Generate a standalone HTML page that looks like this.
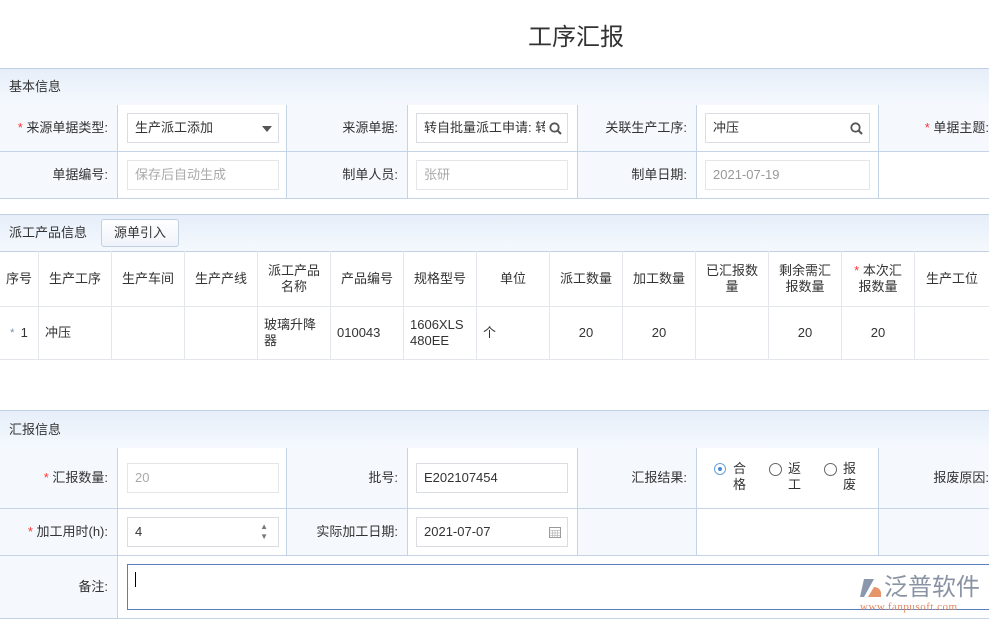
<!DOCTYPE html>
<html><head><meta charset="utf-8"><style>
*{margin:0;padding:0;box-sizing:border-box}
body{width:989px;height:623px;overflow:hidden;background:#fff;font-family:"Liberation Sans","Noto Sans CJK SC",sans-serif;font-size:13px;color:#333;position:relative}
.a{position:absolute}
.hd{position:absolute;left:0;width:989px;background:linear-gradient(#e6eef9,#f5f9fe);border-top:1px solid #c2d0e4;border-bottom:1px solid #c2d0e4;padding-left:9px;color:#333}
.lb{position:absolute;background:#f5f9fe;border-right:1px solid #c5d3e6;border-bottom:1px solid #c5d3e6;text-align:right;padding-right:9px;color:#333}
.vl{position:absolute;background:#fff;border-right:1px solid #c5d3e6;border-bottom:1px solid #c5d3e6}
.in{position:absolute;border:1px solid #d9dde2;background:#fff;height:30px;line-height:28px;padding-left:7px;color:#333;font-size:13px;overflow:hidden;white-space:nowrap}
.ph{color:#aaa}
.s{color:#f33}
.th,.td{position:absolute;border-right:1px solid #e3e6ea;border-bottom:1px solid #e3e6ea;display:flex;align-items:center;justify-content:center;text-align:center;line-height:16px;font-size:13px}
</style></head><body>
<div class="a" style="left:0;top:17px;width:1152px;text-align:center;font-size:24px;color:#333">工序汇报</div>

<div class="hd" style="top:68px;height:38px;line-height:36px">基本信息</div>
<div class="lb" style="left:0;top:105px;width:118px;height:47px;line-height:46px"><span class="s">* </span>来源单据类型:</div>
<div class="vl" style="left:118px;top:105px;width:169px;height:47px"></div>
<div class="in" style="left:127px;top:113px;width:152px">生产派工添加<span class="a" style="right:6px;top:12px;border-left:5px solid transparent;border-right:5px solid transparent;border-top:6px solid #555"></span></div>
<div class="lb" style="left:287px;top:105px;width:121px;height:47px;line-height:46px">来源单据:</div>
<div class="vl" style="left:408px;top:105px;width:170px;height:47px"></div>
<div class="in" style="left:416px;top:113px;width:152px;padding-right:22px">转自批量派工申请: 转<span class="a" style="right:0;top:0;width:22px;height:28px;background:#fff"></span></div>
<svg class="a" style="left:549px;top:122px" width="13" height="13" viewBox="0 0 13 13"><circle cx="5.5" cy="5.5" r="4.2" fill="none" stroke="#555" stroke-width="1.8"/><path d="M8.5 8.5L12 12" stroke="#555" stroke-width="2"/></svg>
<div class="lb" style="left:578px;top:105px;width:119px;height:47px;line-height:46px">关联生产工序:</div>
<div class="vl" style="left:697px;top:105px;width:182px;height:47px"></div>
<div class="in" style="left:705px;top:113px;width:165px">冲压<svg class="a" style="right:6px;top:8px" width="13" height="13" viewBox="0 0 13 13"><circle cx="5.5" cy="5.5" r="4.2" fill="none" stroke="#555" stroke-width="1.8"/><path d="M8.5 8.5L12 12" stroke="#555" stroke-width="2"/></svg></div>
<div class="lb" style="left:879px;top:105px;width:110px;height:47px;line-height:46px;border-right:0;padding-right:0"><span class="s">* </span>单据主题:</div>

<div class="lb" style="left:0;top:152px;width:118px;height:47px;line-height:46px">单据编号:</div>
<div class="vl" style="left:118px;top:152px;width:169px;height:47px"></div>
<div class="in ph" style="left:127px;top:160px;width:152px;background:#fff;border-color:#e4e6e9">保存后自动生成</div>
<div class="lb" style="left:287px;top:152px;width:121px;height:47px;line-height:46px">制单人员:</div>
<div class="vl" style="left:408px;top:152px;width:170px;height:47px"></div>
<div class="in ph" style="left:416px;top:160px;width:152px;border-color:#e4e6e9">张研</div>
<div class="lb" style="left:578px;top:152px;width:119px;height:47px;line-height:46px">制单日期:</div>
<div class="vl" style="left:697px;top:152px;width:182px;height:47px"></div>
<div class="in ph" style="left:705px;top:160px;width:165px;border-color:#e4e6e9;color:#999">2021-07-19</div>
<div class="vl" style="left:879px;top:152px;width:110px;height:47px;border-right:0;background:#fff"></div>

<div class="hd" style="top:214px;height:38px;line-height:36px">派工产品信息<span class="a" style="left:101px;top:4px;width:78px;height:28px;border:1px solid #c2d0e4;border-radius:3px;background:linear-gradient(#fff,#eef3fa);text-align:center;line-height:26px">源单引入</span></div>

<div class="th" style="left:0;top:251px;width:39px;height:56px">序号</div>
<div class="th" style="left:39px;top:251px;width:73px;height:56px">生产工序</div>
<div class="th" style="left:112px;top:251px;width:73px;height:56px">生产车间</div>
<div class="th" style="left:185px;top:251px;width:73px;height:56px">生产产线</div>
<div class="th" style="left:258px;top:251px;width:73px;height:56px">派工产品<br>名称</div>
<div class="th" style="left:331px;top:251px;width:73px;height:56px">产品编号</div>
<div class="th" style="left:404px;top:251px;width:73px;height:56px">规格型号</div>
<div class="th" style="left:477px;top:251px;width:73px;height:56px">单位</div>
<div class="th" style="left:550px;top:251px;width:73px;height:56px">派工数量</div>
<div class="th" style="left:623px;top:251px;width:73px;height:56px">加工数量</div>
<div class="th" style="left:696px;top:251px;width:73px;height:56px;align-items:flex-start;padding-top:12px">已汇报数<br>量</div>
<div class="th" style="left:769px;top:251px;width:73px;height:56px">剩余需汇<br>报数量</div>
<div class="th" style="left:842px;top:251px;width:73px;height:56px"><span><span class="s">* </span>本次汇<br>报数量</span></div>
<div class="th" style="left:915px;top:251px;width:74px;height:56px;border-right:0">生产工位</div>

<div class="td" style="left:0;top:307px;width:39px;height:53px"><span style="color:#7a8cb0;font-size:11px">*&nbsp;&nbsp;</span>1</div>
<div class="td" style="left:39px;top:307px;width:73px;height:53px;justify-content:flex-start;padding-left:6px">冲压</div>
<div class="td" style="left:112px;top:307px;width:73px;height:53px"></div>
<div class="td" style="left:185px;top:307px;width:73px;height:53px"></div>
<div class="td" style="left:258px;top:307px;width:73px;height:53px;justify-content:flex-start;text-align:left;padding-left:6px">玻璃升降<br>器</div>
<div class="td" style="left:331px;top:307px;width:73px;height:53px;justify-content:flex-start;padding-left:6px">010043</div>
<div class="td" style="left:404px;top:307px;width:73px;height:53px;justify-content:flex-start;text-align:left;padding-left:6px">1606XLS<br>480EE</div>
<div class="td" style="left:477px;top:307px;width:73px;height:53px;justify-content:flex-start;padding-left:6px">个</div>
<div class="td" style="left:550px;top:307px;width:73px;height:53px">20</div>
<div class="td" style="left:623px;top:307px;width:73px;height:53px">20</div>
<div class="td" style="left:696px;top:307px;width:73px;height:53px"></div>
<div class="td" style="left:769px;top:307px;width:73px;height:53px">20</div>
<div class="td" style="left:842px;top:307px;width:73px;height:53px">20</div>
<div class="td" style="left:915px;top:307px;width:74px;height:53px;border-right:0"></div>

<div class="hd" style="top:410px;height:39px;line-height:37px">汇报信息</div>
<div class="lb" style="left:0;top:448px;width:118px;height:61px;line-height:60px"><span class="s">* </span>汇报数量:</div>
<div class="vl" style="left:118px;top:448px;width:169px;height:61px"></div>
<div class="in ph" style="left:127px;top:463px;width:152px;border-color:#e4e6e9">20</div>
<div class="lb" style="left:287px;top:448px;width:121px;height:61px;line-height:60px">批号:</div>
<div class="vl" style="left:408px;top:448px;width:170px;height:61px"></div>
<div class="in" style="left:416px;top:463px;width:152px">E202107454</div>
<div class="lb" style="left:578px;top:448px;width:119px;height:61px;line-height:60px">汇报结果:</div>
<div class="vl" style="left:697px;top:448px;width:182px;height:61px"></div>
<div class="a" style="left:714px;top:463px;width:12px;height:12px;border:1px solid #6aa0d8;border-radius:50%"><div class="a" style="left:3px;top:3px;width:4px;height:4px;border-radius:50%;background:#4a8ad0"></div></div>
<div class="a" style="left:733px;top:461px;width:14px;line-height:16px">合格</div>
<div class="a" style="left:769px;top:463px;width:13px;height:13px;border:1px solid #666;border-radius:50%"></div>
<div class="a" style="left:788px;top:461px;width:14px;line-height:16px">返工</div>
<div class="a" style="left:824px;top:463px;width:13px;height:13px;border:1px solid #666;border-radius:50%"></div>
<div class="a" style="left:843px;top:461px;width:14px;line-height:16px">报废</div>
<div class="lb" style="left:879px;top:448px;width:110px;height:61px;line-height:60px;border-right:0;padding-right:0">报废原因:</div>

<div class="lb" style="left:0;top:509px;width:118px;height:47px;line-height:46px"><span class="s">* </span>加工用时(h):</div>
<div class="vl" style="left:118px;top:509px;width:169px;height:47px"></div>
<div class="in" style="left:127px;top:517px;width:152px">4<span class="a" style="right:10px;top:4px;color:#777;font-size:8px;line-height:10px">▲<br>▼</span></div>
<div class="lb" style="left:287px;top:509px;width:121px;height:47px;line-height:46px">实际加工日期:</div>
<div class="vl" style="left:408px;top:509px;width:170px;height:47px"></div>
<div class="in" style="left:416px;top:517px;width:152px">2021-07-07<svg class="a" style="right:6px;top:8px" width="12" height="12" viewBox="0 0 12 12"><rect x="0.5" y="1.5" width="11" height="10" fill="none" stroke="#999"/><path d="M0.5 4.5h11M0.5 7h11M0.5 9.5h11M3.5 4.5v7M6 4.5v7M8.5 4.5v7" stroke="#bbb" stroke-width="0.8"/></svg></div>
<div class="lb" style="left:578px;top:509px;width:119px;height:47px"></div>
<div class="vl" style="left:697px;top:509px;width:182px;height:47px"></div>
<div class="lb" style="left:879px;top:509px;width:110px;height:47px;border-right:0"></div>

<div class="lb" style="left:0;top:556px;width:118px;height:63px;line-height:62px">备注:</div>
<div class="vl" style="left:118px;top:556px;width:871px;height:63px;border-right:0"></div>
<div class="a" style="left:127px;top:564px;width:870px;height:46px;border:1px solid #5a7fbf;background:#fff"><div class="a" style="left:7px;top:7px;width:1px;height:15px;background:#000"></div></div>

<svg class="a" style="left:858px;top:577px" width="26" height="22" viewBox="0 0 26 22"><path d="M6 2h10l-10 18H2z" fill="#8a97ad"/><path d="M10 20l6-10c4 0 7 3 7 6v4z" fill="#e6946a"/></svg>
<div class="a" style="left:884px;top:573px;font-size:24px;color:#8a93a3;line-height:30px">泛普软件</div>
<div class="a" style="left:860px;top:601px;font-size:11px;color:#e08860;font-family:'Liberation Serif',serif;letter-spacing:0.5px;line-height:12px">www.fanpusoft.com</div>
</body></html>
